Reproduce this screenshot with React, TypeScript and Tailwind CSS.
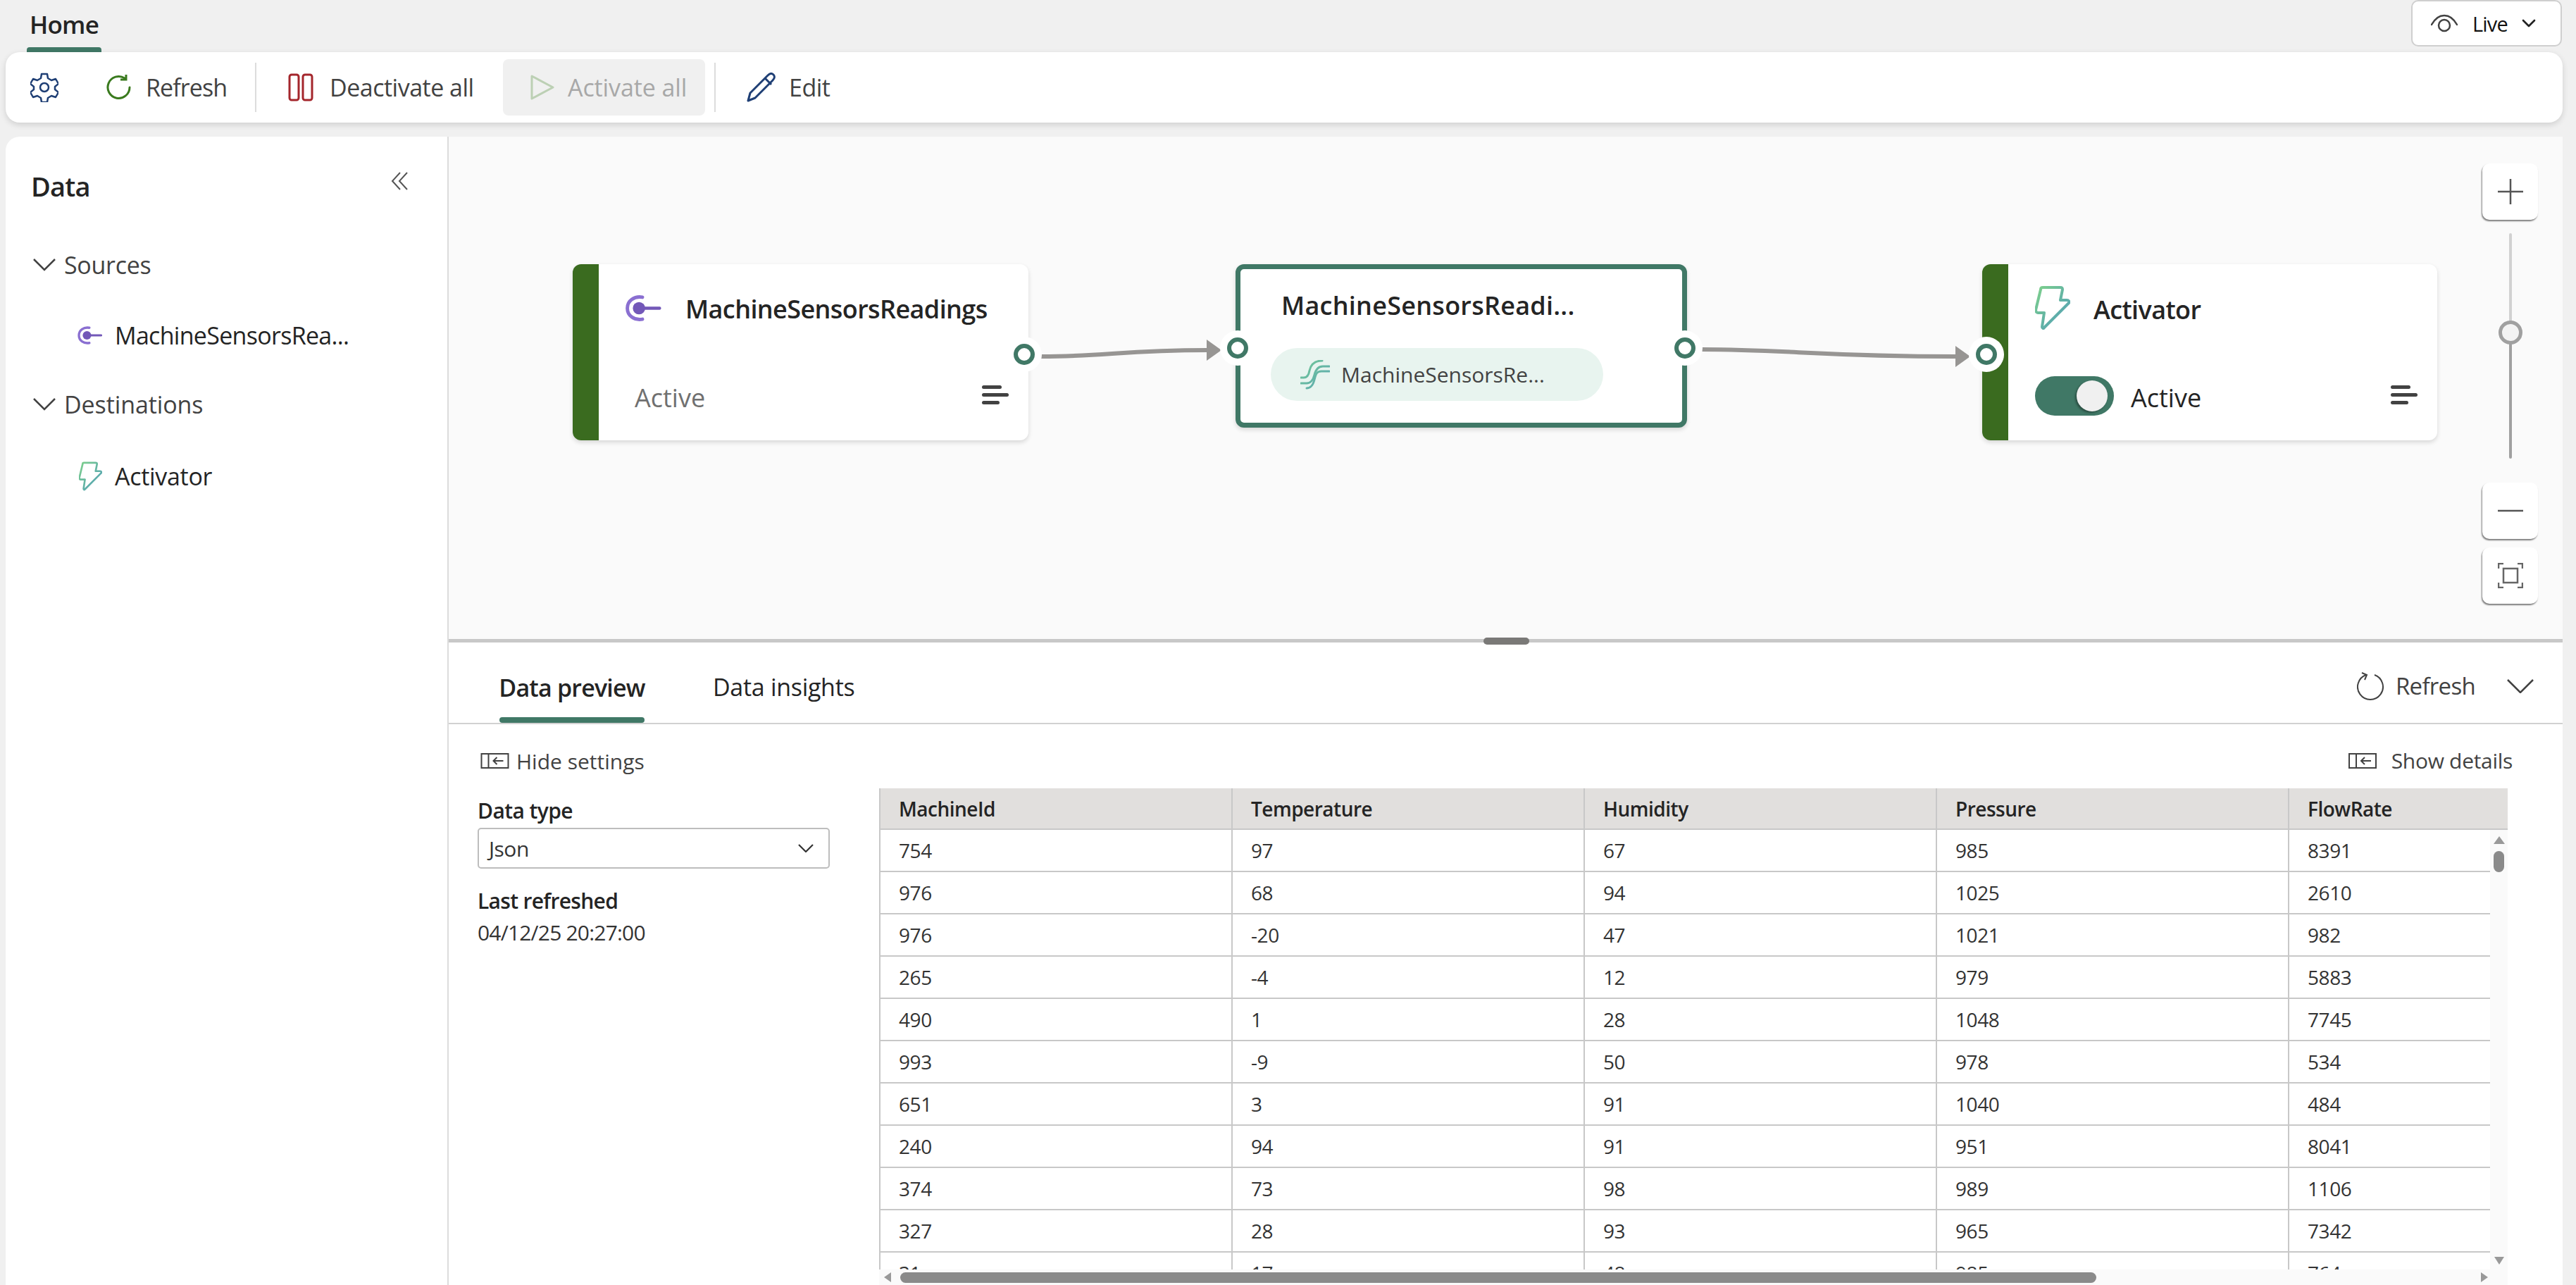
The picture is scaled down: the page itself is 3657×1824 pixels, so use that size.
import { ChevronDown } from "lucide-react"

const rows = [
  ["754", "97", "67", "985", "8391"],
  ["976", "68", "94", "1025", "2610"],
  ["976", "-20", "47", "1021", "982"],
  ["265", "-4", "12", "979", "5883"],
  ["490", "1", "28", "1048", "7745"],
  ["993", "-9", "50", "978", "534"],
  ["651", "3", "91", "1040", "484"],
  ["240", "94", "91", "951", "8041"],
  ["374", "73", "98", "989", "1106"],
  ["327", "28", "93", "965", "7342"],
  ["31", "17", "48", "985", "764"],
]
const columns = ["MachineId", "Temperature", "Humidity", "Pressure", "FlowRate"]

function SourceIcon({ className }: { className: string }) {
  return (
    <svg viewBox="0 0 52 38" className={className} fill="none">
      <path d="M25 3C13 1 3 8 3 19s10 18 22 16" stroke="#8a6fd1" strokeWidth="5" strokeLinecap="round" />
      <circle cx="20" cy="19" r="9" fill="#7358b8" />
      <path d="M24 19h26" stroke="#7358b8" strokeWidth="4.5" strokeLinecap="round" />
    </svg>
  )
}

function BoltIcon({ className, id }: { className: string; id: string }) {
  return (
    <svg viewBox="0 0 50 62" className={className} fill="none">
      <defs>
        <linearGradient id={id} x1="0" y1="0" x2="1" y2="1">
          <stop offset="0" stopColor="#7ed08b" />
          <stop offset="0.6" stopColor="#5fb0a8" />
          <stop offset="1" stopColor="#5aa0b8" />
        </linearGradient>
      </defs>
      <path
        d="M11 2h25c2 0 3 1 3 3l-3 15h9c3 0 4 2 3 4L13 59c-1 2-3 1-3-1l3-20H4c-2 0-3-2-3-4L8 5c0-2 1-3 3-3z"
        stroke={`url(#${id})`}
        strokeWidth="4"
        strokeLinejoin="round"
      />
    </svg>
  )
}

function StreamIcon() {
  return (
    <svg viewBox="0 0 42 42" className="ml-[42px] h-[42px] w-[42px] shrink-0" fill="none" strokeWidth="3" strokeLinecap="round">
      <defs>
        <linearGradient id="stream-grad" gradientUnits="userSpaceOnUse" x1="0" y1="0" x2="42" y2="42">
          <stop offset="0" stopColor="#74c995" />
          <stop offset="1" stopColor="#58a5b4" />
        </linearGradient>
      </defs>
      <path d="M1 25h4c5 0 7-4 8-10 2-9 8-14 18-14" stroke="url(#stream-grad)" />
      <path d="M1 33h8c6 0 9-4 11-12 2-8 6-12 12-12h9" stroke="url(#stream-grad)" />
      <path d="M9 40c6 0 9-4 11-12 2-8 3-12 10-12h11" stroke="url(#stream-grad)" />
    </svg>
  )
}

function MenuLines() {
  return (
    <div className="flex w-[38px] flex-col gap-[6px]">
      <div className="h-[5px] w-[28px] rounded-full bg-[#424242]" />
      <div className="h-[5px] w-[38px] rounded-full bg-[#424242]" />
      <div className="h-[5px] w-[25px] rounded-full bg-[#424242]" />
    </div>
  )
}

function Port({ className }: { className: string }) {
  return (
    <div className={`absolute flex h-[50px] w-[50px] items-center justify-center rounded-full bg-white ${className}`}>
      <div className="h-[30px] w-[30px] rounded-full border-[6px] border-[#407866] bg-white" />
    </div>
  )
}

function ZoomButton({ children, className = "" }: { children: React.ReactNode; className?: string }) {
  return (
    <div className={`absolute left-[2887px] flex h-[80px] w-[79px] items-center justify-center rounded-[10px] bg-white shadow-[-1px_2px_2px_rgba(0,0,0,0.5)] ${className}`}>
      {children}
    </div>
  )
}

function PanelArrowIcon({ className }: { className: string }) {
  return (
    <svg viewBox="0 0 40 22" className={className} fill="none" stroke="#424242" strokeWidth="2">
      <rect x="1" y="1" width="38" height="20" />
      <path d="M11 1v20" />
      <path d="M32 11H18M23 6l-5 5 5 5" />
    </svg>
  )
}

export default function App() {
  return (
    <div className="flex h-[1824px] w-[3657px] flex-col overflow-hidden bg-[#f0f0f0] font-['Open_Sans',sans-serif] text-[#242424]">
      {/* top tab row */}
      <div className="flex h-[74px] shrink-0 items-start justify-between pr-[20px]">
        <div className="ml-[38px] flex h-[74px] w-[106px] flex-col items-center justify-end">
          <span className="mb-[10px] text-[35px] leading-[44px] font-semibold tracking-[-0.8px]">Home</span>
          <div className="h-[7px] w-full rounded-t-[4px] bg-[#407866]" />
        </div>
        <div className="flex h-[66px] w-[214px] items-center rounded-[10px] border-2 border-[#cfcfcf] bg-white pl-[26px]">
          <svg viewBox="0 0 38 26" className="h-[26px] w-[38px]" fill="none" stroke="#424242" strokeWidth="2.5">
            <path d="M1 15C6 6 12 2 19 2s13 4 18 13" strokeLinecap="round" />
            <circle cx="19" cy="16" r="8" />
          </svg>
          <span className="ml-[21px] mt-[2px] text-[29px] tracking-[-0.8px] text-[#111]">Live</span>
          <ChevronDown className="ml-[14px] h-[32px] w-[32px] text-[#222]" strokeWidth={2} />
        </div>
      </div>

      {/* toolbar */}
      <div className="ml-[8px] mr-[19px] flex h-[100px] shrink-0 items-center rounded-[20px] bg-white text-[34px] tracking-[-0.5px] text-[#424242] shadow-[0_3px_8px_rgba(0,0,0,0.14)]">
        <svg viewBox="0 0 40 42" className="ml-[35px] h-[42px] w-[40px]" fill="none" stroke="#1f3f75" strokeWidth="2.5" strokeLinejoin="round">
          <path d="M16 2h8l1 6 5 3 6-2 4 7-5 4v4l5 4-4 7-6-2-5 3-1 6h-8l-1-6-5-3-6 2-4-7 5-4v-4l-5-4 4-7 6 2 5-3z" />
          <circle cx="20" cy="21" r="6" />
        </svg>
        <svg viewBox="0 0 36 36" className="ml-[68px] h-[36px] w-[36px]" fill="none" stroke="#3a7a1e" strokeWidth="3">
          <path d="M26 5A15.5 15.5 0 1 0 33 18" strokeLinecap="round" />
          <path d="M27 0v8h-8" transform="translate(1 -1)" />
        </svg>
        <span className="ml-[20px] w-[115px] whitespace-nowrap tracking-[-0.9px]">Refresh</span>
        <div className="ml-[40px] h-[70px] w-[2px] bg-[#dcdcdc]" />
        <svg viewBox="0 0 36 40" className="ml-[45px] h-[40px] w-[36px]" fill="none" stroke="#a4262c" strokeWidth="3">
          <rect x="2" y="2" width="13" height="36" rx="3" />
          <rect x="21" y="2" width="13" height="36" rx="3" />
        </svg>
        <span className="ml-[23px] w-[206px] whitespace-nowrap">Deactivate all</span>
        <div className="ml-[40px] flex h-[80px] w-[287px] items-center rounded-[8px] bg-[#f0f0f0] text-[#a8a8a8]">
          <svg viewBox="0 0 34 36" className="ml-[39px] h-[36px] w-[34px]" fill="none" stroke="#bcd0b4" strokeWidth="3" strokeLinejoin="round">
            <path d="M2 2l30 16L2 34z" />
          </svg>
          <span className="ml-[19px] whitespace-nowrap tracking-[-0.1px]">Activate all</span>
        </div>
        <div className="ml-[13px] h-[70px] w-[2px] bg-[#dcdcdc]" />
        <svg viewBox="0 0 42 42" className="ml-[44px] h-[42px] w-[42px]" fill="none" stroke="#1f3f75" strokeWidth="3" strokeLinejoin="round">
          <path d="M2 40l3-11L30 4c3-3 6-3 8-1s2 5-1 8L12 36z" />
          <path d="M26 8l9 9" />
        </svg>
        <span className="ml-[18px] whitespace-nowrap">Edit</span>
      </div>

      {/* body */}
      <div className="mt-[20px] ml-[8px] mr-[19px] flex min-h-0 flex-1">
        {/* data panel */}
        <aside className="flex w-[629px] shrink-0 flex-col rounded-tl-[20px] border-r-2 border-[#dcdcdc] bg-white">
          <div className="mt-[50px] flex items-start justify-between pl-[36px] pr-[56px]">
            <span className="text-[38px] leading-[40px] font-semibold tracking-[-0.8px]">Data</span>
            <svg viewBox="0 0 24 26" className="h-[26px] w-[24px]" fill="none" stroke="#555" strokeWidth="2">
              <path d="M13 1L2 13l11 12M23 1L12 13l11 12" />
            </svg>
          </div>
          <div className="mt-[62px] flex h-[60px] items-center pl-[39px] text-[34px] tracking-[-0.3px] text-[#424242]">
            <svg viewBox="0 0 32 18" className="h-[18px] w-[32px]" fill="none" stroke="#424242" strokeWidth="2.5">
              <path d="M1 1l15 15L31 1" />
            </svg>
            <span className="ml-[12px]">Sources</span>
          </div>
          <div className="mt-[40px] flex h-[60px] items-center pl-[102px] text-[34px] tracking-[-0.7px]">
            <SourceIcon className="h-[26px] w-[35px]" />
            <span className="ml-[18px] whitespace-nowrap">MachineSensorsRea...</span>
          </div>
          <div className="mt-[38px] flex h-[60px] items-center pl-[39px] text-[34px] tracking-[-0.1px] text-[#424242]">
            <svg viewBox="0 0 32 18" className="h-[18px] w-[32px]" fill="none" stroke="#424242" strokeWidth="2.5">
              <path d="M1 1l15 15L31 1" />
            </svg>
            <span className="ml-[12px]">Destinations</span>
          </div>
          <div className="mt-[42px] flex h-[60px] items-center pl-[104px] text-[34px] tracking-[-0.3px]">
            <BoltIcon className="h-[42px] w-[33px]" id="bolt-side" />
            <span className="ml-[18px]">Activator</span>
          </div>
        </aside>

        <div className="flex min-w-0 flex-1 flex-col">
          {/* diagram canvas */}
          <div className="relative h-[713px] shrink-0 bg-[#fafafa]">
            <svg className="absolute left-0 top-0 h-full w-full" fill="none">
              <path d="M841 312C930 312 960 303 1076 303" stroke="#979593" strokeWidth="6" />
              <path d="M1076 288l21 15-21 15z" fill="#979593" />
              <path d="M1779 302C1900 302 1950 312 2139 312" stroke="#979593" strokeWidth="6" />
              <path d="M2139 297l21 15-21 15z" fill="#979593" />
            </svg>

            <div className="absolute left-[176px] top-[181px] flex h-[250px] w-[647px] overflow-hidden rounded-[12px] bg-white shadow-[0_3px_6px_rgba(0,0,0,0.14)]">
              <div className="w-[37px] bg-[#3a6b1f]" />
              <div className="relative flex-1">
                <SourceIcon className="absolute left-[37px] top-[44px] h-[37px] w-[52px]" />
                <span className="absolute left-[123px] top-[41px] text-[36px] leading-[46px] font-semibold tracking-[-0.6px]">MachineSensorsReadings</span>
                <span className="absolute left-[51px] top-[168px] text-[36px] leading-[44px] text-[#707070]">Active</span>
                <div className="absolute right-[28px] top-[172px]"><MenuLines /></div>
              </div>
            </div>
            <Port className="left-[792px] top-[284px]" />

            <div className="absolute left-[1117px] top-[181px] h-[232px] w-[641px] rounded-[12px] border-[7px] border-[#407866] bg-white shadow-[0_3px_6px_rgba(0,0,0,0.14)]">
              <span className="absolute left-[58px] top-[29px] whitespace-nowrap text-[36px] leading-[46px] font-semibold tracking-[0.25px]">MachineSensorsReadi...</span>
              <div className="absolute left-[43px] top-[112px] flex h-[75px] w-[472px] items-center rounded-full bg-[#e8f4ef]">
                <StreamIcon />
                <span className="ml-[16px] whitespace-nowrap text-[30px] text-[#424242]">MachineSensorsRe...</span>
              </div>
            </div>
            <Port className="left-[1730px] top-[275px]" />
            <Port className="left-[1095px] top-[275px]" />

            <div className="absolute left-[2177px] top-[181px] flex h-[250px] w-[646px] overflow-hidden rounded-[12px] bg-white shadow-[0_3px_6px_rgba(0,0,0,0.14)]">
              <div className="w-[37px] bg-[#3a6b1f]" />
              <div className="relative flex-1">
                <BoltIcon className="absolute left-[38px] top-[31px] h-[62px] w-[50px]" id="bolt-card" />
                <span className="absolute left-[121px] top-[42px] text-[36px] leading-[46px] font-semibold tracking-[-0.6px]">Activator</span>
                <div className="absolute left-[38px] top-[159px] h-[56px] w-[112px] rounded-full bg-[#407866]">
                  <div className="absolute left-[59px] top-[6px] h-[44px] w-[44px] rounded-full bg-[#f0f0f0] shadow-[-2px_2px_3px_rgba(0,0,0,0.35)]" />
                </div>
                <span className="absolute left-[174px] top-[168px] text-[36px] leading-[44px]">Active</span>
                <div className="absolute right-[28px] top-[172px]"><MenuLines /></div>
              </div>
            </div>
            <Port className="left-[2158px] top-[284px]" />

            {/* zoom controls */}
            <ZoomButton className="top-[38px]">
              <svg viewBox="0 0 36 36" className="h-[36px] w-[36px]" stroke="#555" strokeWidth="2.5"><path d="M18 0v36M0 18h36" /></svg>
            </ZoomButton>
            <div className="absolute left-[2925px] top-[137px] h-[141px] w-[4px] rounded-full bg-[#d1d1d1]" />
            <div className="absolute left-[2925px] top-[278px] h-[179px] w-[4px] rounded-full bg-[#a0a0a0]" />
            <div className="absolute left-[2910px] top-[261px] h-[34px] w-[34px] rounded-full border-[5px] border-[#a0a0a0] bg-[#f3f3f3]" />
            <ZoomButton className="top-[491px]">
              <svg viewBox="0 0 36 4" className="h-[4px] w-[36px]" stroke="#555" strokeWidth="2.5"><path d="M0 2h36" /></svg>
            </ZoomButton>
            <ZoomButton className="top-[583px]">
              <svg viewBox="0 0 36 36" className="h-[36px] w-[36px]" fill="none" stroke="#666" strokeWidth="2.5">
                <path d="M1 8V1h7M28 1h7v7M1 28v7h7M35 28v7h-7" />
                <rect x="8" y="8" width="20" height="20" />
              </svg>
            </ZoomButton>
          </div>

          {/* splitter */}
          <div className="relative h-[5px] shrink-0 bg-[#c8c8c8]">
            <div className="absolute left-[1469px] -top-[2px] h-[10px] w-[65px] rounded-full bg-[#7a7977]" />
          </div>

          {/* preview panel */}
          <div className="flex min-h-0 flex-1 flex-col bg-white">
            <div className="flex h-[116px] shrink-0 items-start border-b-2 border-[#d1d1d1]">
              <div className="ml-[72px] flex h-[114px] w-[206px] flex-col items-center justify-end">
                <span className="mb-[20px] whitespace-nowrap text-[34px] leading-[44px] font-semibold tracking-[-0.8px]">Data preview</span>
                <div className="h-[8px] w-full rounded-full bg-[#407866]" />
              </div>
              <span className="ml-[97px] mt-[41px] whitespace-nowrap text-[34px] leading-[44px] tracking-[-0.3px]">Data insights</span>
              <div className="ml-auto mt-[40px] flex items-center text-[33px] leading-[44px] tracking-[-0.7px] text-[#424242]">
                <svg viewBox="0 0 40 40" className="h-[40px] w-[40px]" fill="none" stroke="#424242" strokeWidth="2">
                  <path d="M13 4a18 18 0 1 0 12 0" />
                  <path d="M7 1l7 3-3 7" />
                </svg>
                <span className="ml-[15px]">Refresh</span>
                <svg viewBox="0 0 38 20" className="ml-[45px] mr-[41px] h-[20px] w-[38px]" fill="none" stroke="#424242" strokeWidth="2.5">
                  <path d="M1 1l18 18L37 1" />
                </svg>
              </div>
            </div>

            <div className="relative flex min-h-0 flex-1">
              <div className="w-[611px] shrink-0 pl-[41px]">
                <div className="mt-[36px] flex h-[32px] items-center pl-[4px] text-[30px] text-[#424242]">
                  <PanelArrowIcon className="h-[22px] w-[41px]" />
                  <span className="ml-[10px]">Hide settings</span>
                </div>
                <div className="mt-[36px] text-[30px] leading-[38px] font-semibold tracking-[-0.6px]">Data type</div>
                <div className="mt-[5px] flex h-[58px] w-[500px] items-center justify-between rounded-[5px] border-2 border-[#bdbdbd] px-[14px] text-[30px] tracking-[-0.5px] text-[#333]">
                  <span>Json</span>
                  <svg viewBox="0 0 22 12" className="mr-[7px] h-[12px] w-[22px]" fill="none" stroke="#333" strokeWidth="2.2"><path d="M1 1l10 10L21 1" /></svg>
                </div>
                <div className="mt-[27px] text-[30px] leading-[38px] font-semibold tracking-[-0.7px]">Last refreshed</div>
                <div className="mt-[7px] text-[30px] leading-[38px] tracking-[-0.8px] text-[#333]">04/12/25 20:27:00</div>
              </div>

              <div className="relative mt-[91px] flex min-w-0 flex-1 flex-col overflow-hidden pr-[78px]">
                <div className="flex h-[59px] shrink-0 bg-[#e1dfdd]">
                  {columns.map((column) => (
                    <div key={column} className="flex w-[500px] items-center border-l-2 border-b-2 border-[#c8c8c8] pl-[26px] text-[28px] font-semibold tracking-[-0.5px] last:w-[312px]">
                      {column}
                    </div>
                  ))}
                </div>
                {rows.map((row, i) => (
                  <div key={i} className="flex h-[60px] shrink-0">
                    {row.map((cell, j) => (
                      <div key={j} className="flex w-[500px] items-center border-l-2 border-b-2 border-[#c8c8c8] pl-[26px] text-[28px] tracking-[-0.4px] text-[#333] last:w-[312px]">
                        {cell}
                      </div>
                    ))}
                  </div>
                ))}
                {/* scrollbars */}
                <div className="absolute right-[78px] top-[59px] bottom-0 flex w-[25px] flex-col items-center bg-[#fafafa]">
                  <div className="mt-[9px] h-0 w-0 border-x-[8px] border-b-[11px] border-x-transparent border-b-[#999]" />
                  <div className="mt-[10px] h-[30px] w-[15px] rounded-full bg-[#8a8a8a]" />
                </div>
                <div className="absolute right-[83px] bottom-[29px] h-0 w-0 border-x-[7px] border-t-[11px] border-x-transparent border-t-[#999]" />
                <div className="absolute left-0 right-[78px] bottom-0 flex h-[22px] items-center bg-[#fafafa]">
                  <div className="ml-[7px] h-0 w-0 border-y-[7px] border-r-[10px] border-y-transparent border-r-[#999]" />
                  <div className="ml-[13px] h-[15px] w-[1698px] rounded-full bg-[#8a8a8a]" />
                  <div className="ml-auto mr-[28px] h-0 w-0 border-y-[7px] border-l-[10px] border-y-transparent border-l-[#999]" />
                </div>
              </div>

              <div className="absolute right-[71px] top-[29px] flex items-center text-[30px] tracking-[-0.3px] text-[#424242]">
                <PanelArrowIcon className="h-[22px] w-[40px]" />
                <span className="ml-[21px]">Show details</span>
              </div>
            </div>
          </div>
        </div>
      </div>
    </div>
  )
}
